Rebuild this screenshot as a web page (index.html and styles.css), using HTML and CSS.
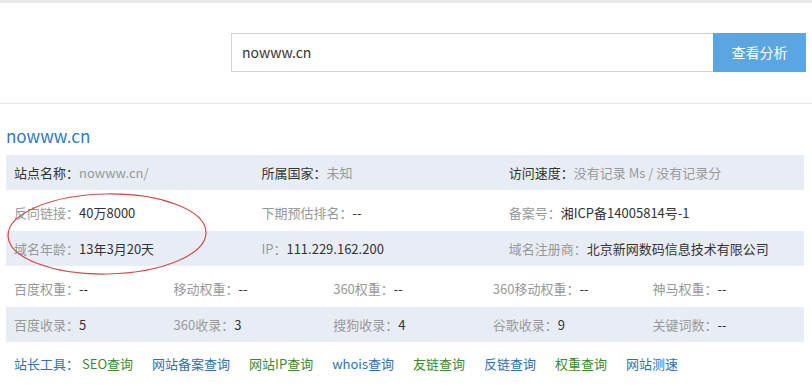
FILE: index.html
```html
<!DOCTYPE html>
<html lang="zh-CN">

<head>
  <meta charset="UTF-8" />
  <title>站点分析</title>
  <link rel="stylesheet" href="styles.css">
</head>

<body>
  <div class="topbar"></div>
  <!-- 搜索 -->
  <div class="search">
    <div class="input">nowww.cn</div>
    <div class="btn">查看分析</div>
  </div>
  <div class="main">
    <h2 class="site">nowww.cn</h2>
    <div class="info">
      <div class="row row3 bg">
        <div class="cell strong">站点名称：<span>nowww.cn/</span></div>
        <div class="cell strong">所属国家：<span>未知</span></div>
        <div class="cell strong">访问速度：<span>没有记录 Ms / 没有记录分</span></div>
      </div>
      <div class="row row3">
        <div class="cell">反向链接：<span>40万8000</span></div>
        <div class="cell">下期预估排名：<span>--</span></div>
        <div class="cell">备案号：<span>湘ICP备14005814号-1</span></div>
      </div>
      <div class="row row3 bg">
        <div class="cell">域名年龄：<span>13年3月20天</span></div>
        <div class="cell">IP：<span>111.229.162.200</span></div>
        <div class="cell">域名注册商：<span>北京新网数码信息技术有限公司</span></div>
      </div>
      <div class="row row5">
        <div class="cell">百度权重：<span>--</span></div>
        <div class="cell">移动权重：<span>--</span></div>
        <div class="cell">360权重：<span>--</span></div>
        <div class="cell">360移动权重：<span>--</span></div>
        <div class="cell">神马权重：<span>--</span></div>
      </div>
      <div class="row row5 bg">
        <div class="cell">百度收录：<span>5</span></div>
        <div class="cell">360收录：<span>3</span></div>
        <div class="cell">搜狗收录：<span>4</span></div>
        <div class="cell">谷歌收录：<span>9</span></div>
        <div class="cell">关键词数：<span>--</span></div>
      </div>
      <div class="tools">
        <span class="label">站长工具：</span>
        <a href="#" class="green">SEO查询</a>
        <a href="#" class="blue">网站备案查询</a>
        <a href="#" class="green">网站IP查询</a>
        <a href="#" class="blue">whois查询</a>
        <a href="#" class="green">友链查询</a>
        <a href="#" class="blue">反链查询</a>
        <a href="#" class="green">权重查询</a>
        <a href="#" class="blue">网站测速</a>
      </div>
      <!-- 红圈标注 -->
      <svg class="mark" width="204" height="86" viewBox="0 0 204 86">
        <ellipse cx="102" cy="43" rx="99" ry="40" fill="none" stroke="#d64a4a" stroke-width="1.2"
          transform="rotate(-1 102 43)" />
      </svg>
    </div>
  </div>
</body>

</html>
```

FILE: styles.css
```css
body {
  margin: 0;
  padding: 0;
  background-color: #fff;
  font-family: "Microsoft YaHei", "Noto Sans CJK SC", sans-serif;
  font-size: 13px;
  color: #333;
}

.topbar {
  height: 3px;
  background-color: #e8e8e8;
}

.search {
  display: flex;
  justify-content: flex-end;
  padding: 30px 6px 31px 0;
  border-bottom: 1px solid #e6e6e6;
}

.search .input {
  width: 482px;
  height: 39px;
  line-height: 37px;
  padding-left: 10px;
  box-sizing: border-box;
  border: 1px solid #d3d3e0;
  border-right: none;
  font-size: 14px;
  color: #333;
}

.search .btn {
  width: 93px;
  height: 39px;
  line-height: 39px;
  text-align: center;
  background-color: #5ba6e2;
  color: #fff;
  font-size: 14px;
}

.main {
  padding: 0 8px 0 6px;
}

.site {
  margin: 0 0 7px;
  padding-top: 20px;
  line-height: 24px;
  font-size: 17px;
  font-weight: normal;
  color: #2b7bbf;
}

.info {
  position: relative;
}

.row {
  display: flex;
  height: 41px;
  padding-top: 3px;
  box-sizing: border-box;
  align-items: center;
  color: #999;
}

.row.bg {
  height: 35px;
  padding-top: 0;
  background-color: #e8edf5;
}

.cell {
  padding-left: 8px;
  box-sizing: border-box;
  white-space: nowrap;
}

.cell span {
  color: #333;
}

.cell.strong {
  color: #333;
}

.cell.strong span {
  color: #999;
}

.row3 .cell {
  width: 31%;
}

.row5 .cell {
  width: 20%;
}

.tools {
  display: flex;
  align-items: center;
  height: 42px;
  padding-left: 8px;
}

.tools .label {
  margin-right: 3px;
  color: #2f6fb3;
}

.tools a {
  margin-right: 19px;
  text-decoration: none;
}

.tools .green {
  color: #3b8a2c;
}

.tools .blue {
  color: #2f6fb3;
}

.mark {
  position: absolute;
  left: -1px;
  top: 36px;
}
```
